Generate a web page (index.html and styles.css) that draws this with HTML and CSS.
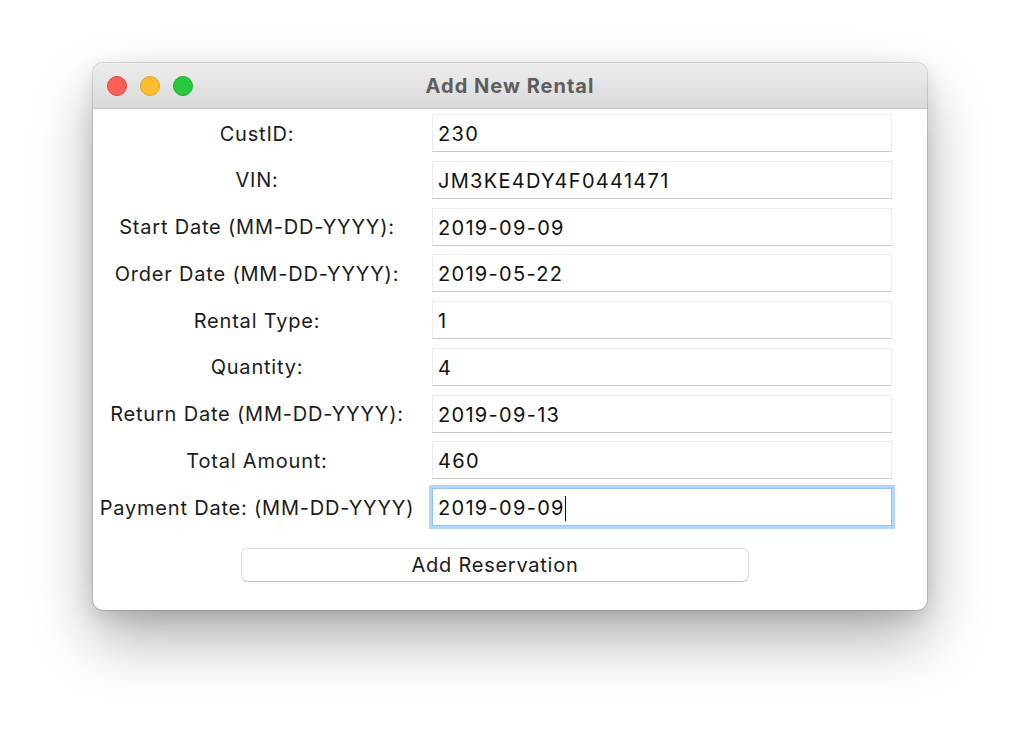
FILE: index.html
```html
<!DOCTYPE html>
<html lang="en">
<head>
<meta charset="utf-8">
<title>Add New Rental</title>
<link rel="stylesheet" href="styles.css">
</head>
<body>
<div class="desktop">
  <div class="window">
    <div class="titlebar">
      <div class="lights">
        <span class="light red"></span>
        <span class="light yellow"></span>
        <span class="light green"></span>
      </div>
      <div class="title">Add New Rental</div>
    </div>
    <div class="content">
      <div class="form">
        <div class="label">CustID:</div>
        <div class="entry">230</div>
        <div class="label">VIN:</div>
        <div class="entry">JM3KE4DY4F0441471</div>
        <div class="label">Start Date (MM-DD-YYYY):</div>
        <div class="entry">2019-09-09</div>
        <div class="label">Order Date (MM-DD-YYYY):</div>
        <div class="entry">2019-05-22</div>
        <div class="label">Rental Type:</div>
        <div class="entry">1</div>
        <div class="label">Quantity:</div>
        <div class="entry">4</div>
        <div class="label">Return Date (MM-DD-YYYY):</div>
        <div class="entry">2019-09-13</div>
        <div class="label">Total Amount:</div>
        <div class="entry">460</div>
        <div class="label">Payment Date: (MM-DD-YYYY)</div>
        <div class="entry focused">2019-09-09<span class="caret"></span></div>
      </div>
      <div class="actions">
        <div class="button">Add Reservation</div>
      </div>
    </div>
  </div>
</div>
</body>
</html>
```
FILE: styles.css
```css
html, body {
  margin: 0;
  padding: 0;
  background: #ffffff;
}
body {
  width: 1020px;
  height: 734px;
  overflow: hidden;
  font-family: "Inter", "Liberation Sans", sans-serif;
  color: #1b1b1b;
}
.desktop {
  padding: 63px 0 0 93px;
}
.window {
  width: 834px;
  height: 547px;
  border-radius: 10px;
  background: #ffffff;
  overflow: hidden;
  box-shadow: 0 0 0 1px rgba(0,0,0,0.12), 0 30px 60px rgba(0,0,0,0.3), 0 6px 20px rgba(0,0,0,0.12);
  display: flex;
  flex-direction: column;
}
.titlebar {
  height: 45px;
  border-bottom: 1px solid #c6c6c6;
  background: linear-gradient(#ededed, #d9d9d9);
  display: flex;
  align-items: center;
  position: relative;
}
.lights {
  display: flex;
  gap: 13px;
  padding-left: 14px;
  position: relative;
  z-index: 1;
}
.light {
  width: 20px;
  height: 20px;
  border-radius: 50%;
  box-sizing: border-box;
}
.red { background: #fe5f57; border: 1px solid #e0443e; }
.yellow { background: #febc2e; border: 1px solid #dea123; }
.green { background: #28c840; border: 1px solid #1aab29; }
.title {
  position: absolute;
  left: 0;
  right: 0;
  text-align: center;
  font-weight: 700;
  font-size: 20px;
  letter-spacing: 1px;
  color: #5e5e5e;
}
.content {
  padding-top: 5px;
}
.form {
  display: grid;
  grid-template-columns: 328px 460px;
  grid-auto-rows: 38px;
  column-gap: 11px;
  row-gap: 8.75px;
}
.label {
  display: flex;
  align-items: center;
  justify-content: center;
  font-size: 20px;
  letter-spacing: 0.8px;
  white-space: nowrap;
  padding-top: 1px;
}
.entry {
  box-sizing: border-box;
  border: 1px solid #ececec;
  border-bottom-color: #c9c9c9;
  display: flex;
  align-items: center;
  padding: 2px 0 0 5px;
  font-size: 20px;
  letter-spacing: 1.3px;
  color: #111;
  white-space: nowrap;
}
.entry.focused {
  border: 1px solid #8fc1f5;
  box-shadow: 0 0 0 3px #b4d6fb;
}
.caret {
  display: inline-block;
  width: 1.5px;
  height: 25px;
  background: #111;
  margin-left: 0;
}
.actions {
  display: flex;
  justify-content: center;
  padding: 22px 0 0 0;
}
.button {
  margin-left: -30px;
  width: 508px;
  height: 34px;
  box-sizing: border-box;
  border: 1px solid #dcdcdc;
  border-bottom-color: #c4c4c4;
  border-radius: 6px;
  display: flex;
  align-items: center;
  justify-content: center;
  font-size: 20px;
  letter-spacing: 0.75px;
  background: #fff;
}
```
